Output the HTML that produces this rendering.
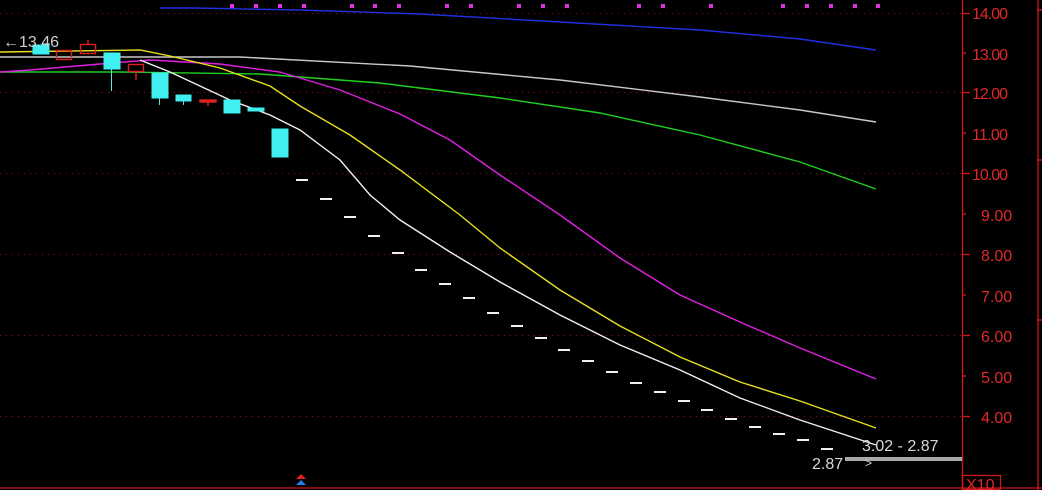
<!DOCTYPE html>
<html><head><meta charset="utf-8"><style>
html,body{margin:0;padding:0;background:#000;width:1042px;height:490px;overflow:hidden}
svg{display:block}
text{font-family:"Liberation Sans",sans-serif}
</style></head><body>
<svg width="1042" height="490" viewBox="0 0 1042 490" xmlns="http://www.w3.org/2000/svg">
<g stroke="#a01010" stroke-width="1" stroke-dasharray="1,5">
<line x1="0" y1="13.5" x2="962" y2="13.5"/>
<line x1="0" y1="92.5" x2="962" y2="92.5"/>
<line x1="0" y1="173.5" x2="962" y2="173.5"/>
<line x1="0" y1="254.5" x2="962" y2="254.5"/>
<line x1="0" y1="335.5" x2="962" y2="335.5"/>
<line x1="0" y1="416.5" x2="962" y2="416.5"/>
</g>
<g stroke="#d01818" stroke-width="1.3" fill="none">
<line x1="962.5" y1="0" x2="962.5" y2="490"/>
<line x1="1038" y1="0" x2="1038" y2="490"/>
<line x1="0" y1="488" x2="1042" y2="488"/>
<line x1="962" y1="13.5" x2="970" y2="13.5"/><line x1="962" y1="53" x2="966" y2="53"/>
<line x1="962" y1="92.5" x2="970" y2="92.5"/><line x1="962" y1="133" x2="966" y2="133"/>
<line x1="962" y1="173.5" x2="970" y2="173.5"/><line x1="962" y1="214" x2="966" y2="214"/>
<line x1="962" y1="254.5" x2="970" y2="254.5"/><line x1="962" y1="295" x2="966" y2="295"/>
<line x1="962" y1="335.5" x2="970" y2="335.5"/><line x1="962" y1="376" x2="966" y2="376"/>
<line x1="962" y1="416.5" x2="970" y2="416.5"/>
<line x1="1037" y1="10" x2="1042" y2="10"/><line x1="1037" y1="160" x2="1042" y2="160"/>
<line x1="1037" y1="320" x2="1042" y2="320"/>
<rect x="962.5" y="475.5" width="38" height="14"/>
</g>
<g fill="#e02828" font-size="16">
<text x="972" y="19" textLength="36">14.00</text><text x="972" y="60" textLength="36">13.00</text>
<text x="972" y="99" textLength="36">12.00</text><text x="972" y="140" textLength="36">11.00</text>
<text x="972" y="180" textLength="36">10.00</text><text x="981" y="221">9.00</text>
<text x="981" y="261">8.00</text><text x="981" y="302">7.00</text>
<text x="981" y="342">6.00</text><text x="981" y="383">5.00</text>
<text x="981" y="423">4.00</text><text x="966" y="490">X10</text>
</g>
<g fill="#e030e0">
<rect x="230" y="4" width="4" height="4"/><rect x="254" y="4" width="4" height="4"/><rect x="278" y="4" width="4" height="4"/><rect x="302" y="4" width="4" height="4"/>
<rect x="350" y="4" width="4" height="4"/><rect x="373" y="4" width="4" height="4"/><rect x="397" y="4" width="4" height="4"/>
<rect x="445" y="4" width="4" height="4"/><rect x="469" y="4" width="4" height="4"/>
<rect x="517" y="4" width="4" height="4"/><rect x="541" y="4" width="4" height="4"/><rect x="565" y="4" width="4" height="4"/>
<rect x="637" y="4" width="4" height="4"/><rect x="661" y="4" width="4" height="4"/>
<rect x="709" y="4" width="4" height="4"/><rect x="781" y="4" width="4" height="4"/><rect x="805" y="4" width="4" height="4"/>
<rect x="829" y="4" width="4" height="4"/><rect x="853" y="4" width="4" height="4"/><rect x="876" y="4" width="4" height="4"/>
</g>
<g fill="none" stroke-width="1.4">
<path stroke="#2030e0" d="M160,8 L195,8 L300,10 L420,14 L560,22 L700,30 L800,39 L876,50"/>
<path stroke="#c8c8c8" d="M0,57 L240,57 L410,66 L560,80 L700,97 L800,110 L876,122"/>
<path stroke="#20d020" d="M0,72 L120,72 L260,74 L380,83 L500,98 L600,113 L700,135 L800,162 L876,189"/>
<path stroke="#e020e0" d="M0,72 L30,70 L100,64 L150,60 L220,64 L280,72 L340,90 L400,114 L450,140 L500,175 L560,215 L620,258 L680,295 L740,322 L800,348 L876,379"/>
<path stroke="#e8e020" d="M0,52 L140,50 L170,56 L220,68 L270,86 L300,106 L350,135 L400,170 L460,215 L500,248 L560,290 L620,326 L680,357 L740,382 L800,401 L876,428"/>
<path stroke="#f0f0f0" d="M140,60 L170,72 L230,100 L270,115 L300,130 L340,160 L370,195 L400,220 L450,252 L500,282 L560,315 L620,345 L680,370 L740,398 L800,420 L876,445"/>
</g>
<g stroke="#f0f0f0" stroke-width="2">
<path d="M296,180h12M320,199h12M344,217h12M368,236h12M392,253h12M415,270h12M439,284h12M463,298h12M487,313h12M511,326h12M535,338h12M558,350h12M582,361h12M606,372h12M630,383h12M654,392h12M678,401h12M701,410h12M725,419h12M749,427h12M773,434h12M797,440h12M821,449h12"/>
</g>
<g fill="#40f0f0" stroke="#40f0f0">
<rect x="33" y="45" width="16" height="9"/>
<rect x="104" y="53" width="16" height="16"/><line x1="111.5" y1="69" x2="111.5" y2="91"/>
<rect x="152" y="73" width="16" height="25"/><line x1="159.5" y1="98" x2="159.5" y2="105"/>
<rect x="176" y="95" width="15" height="6"/><line x1="183.5" y1="101" x2="183.5" y2="105"/>
<rect x="224" y="100" width="16" height="13"/>
<rect x="248" y="108" width="16" height="3"/>
<rect x="272" y="129" width="16" height="28"/>
</g>
<g fill="none" stroke="#e02020" stroke-width="1.4">
<rect x="56.5" y="50.5" width="15" height="9"/>
<rect x="80.5" y="44.5" width="15" height="9"/><line x1="88" y1="40" x2="88" y2="44"/>
<rect x="128.5" y="64.5" width="15" height="7"/><line x1="136" y1="72" x2="136" y2="80"/>
<rect x="200" y="100" width="16" height="2" fill="#e02020"/><line x1="208" y1="102" x2="208" y2="106"/>
</g>
<text x="3" y="47" fill="#d0d0d0" font-size="16">←13.46</text>
<rect x="845" y="457" width="117" height="4" fill="#a8a8a8"/>
<text x="862" y="451" fill="#d8d8d8" font-size="16">3.02 - 2.87</text>
<text x="812" y="469" fill="#d8d8d8" font-size="16">2.87</text>
<text x="865" y="467" fill="#d8d8d8" font-size="12">&gt;</text>
<polygon points="296,479 301,474 306,479" fill="#e02020"/>
<polygon points="296,485 301,480 306,485" fill="#2080f0"/>
</svg>
</body></html>
